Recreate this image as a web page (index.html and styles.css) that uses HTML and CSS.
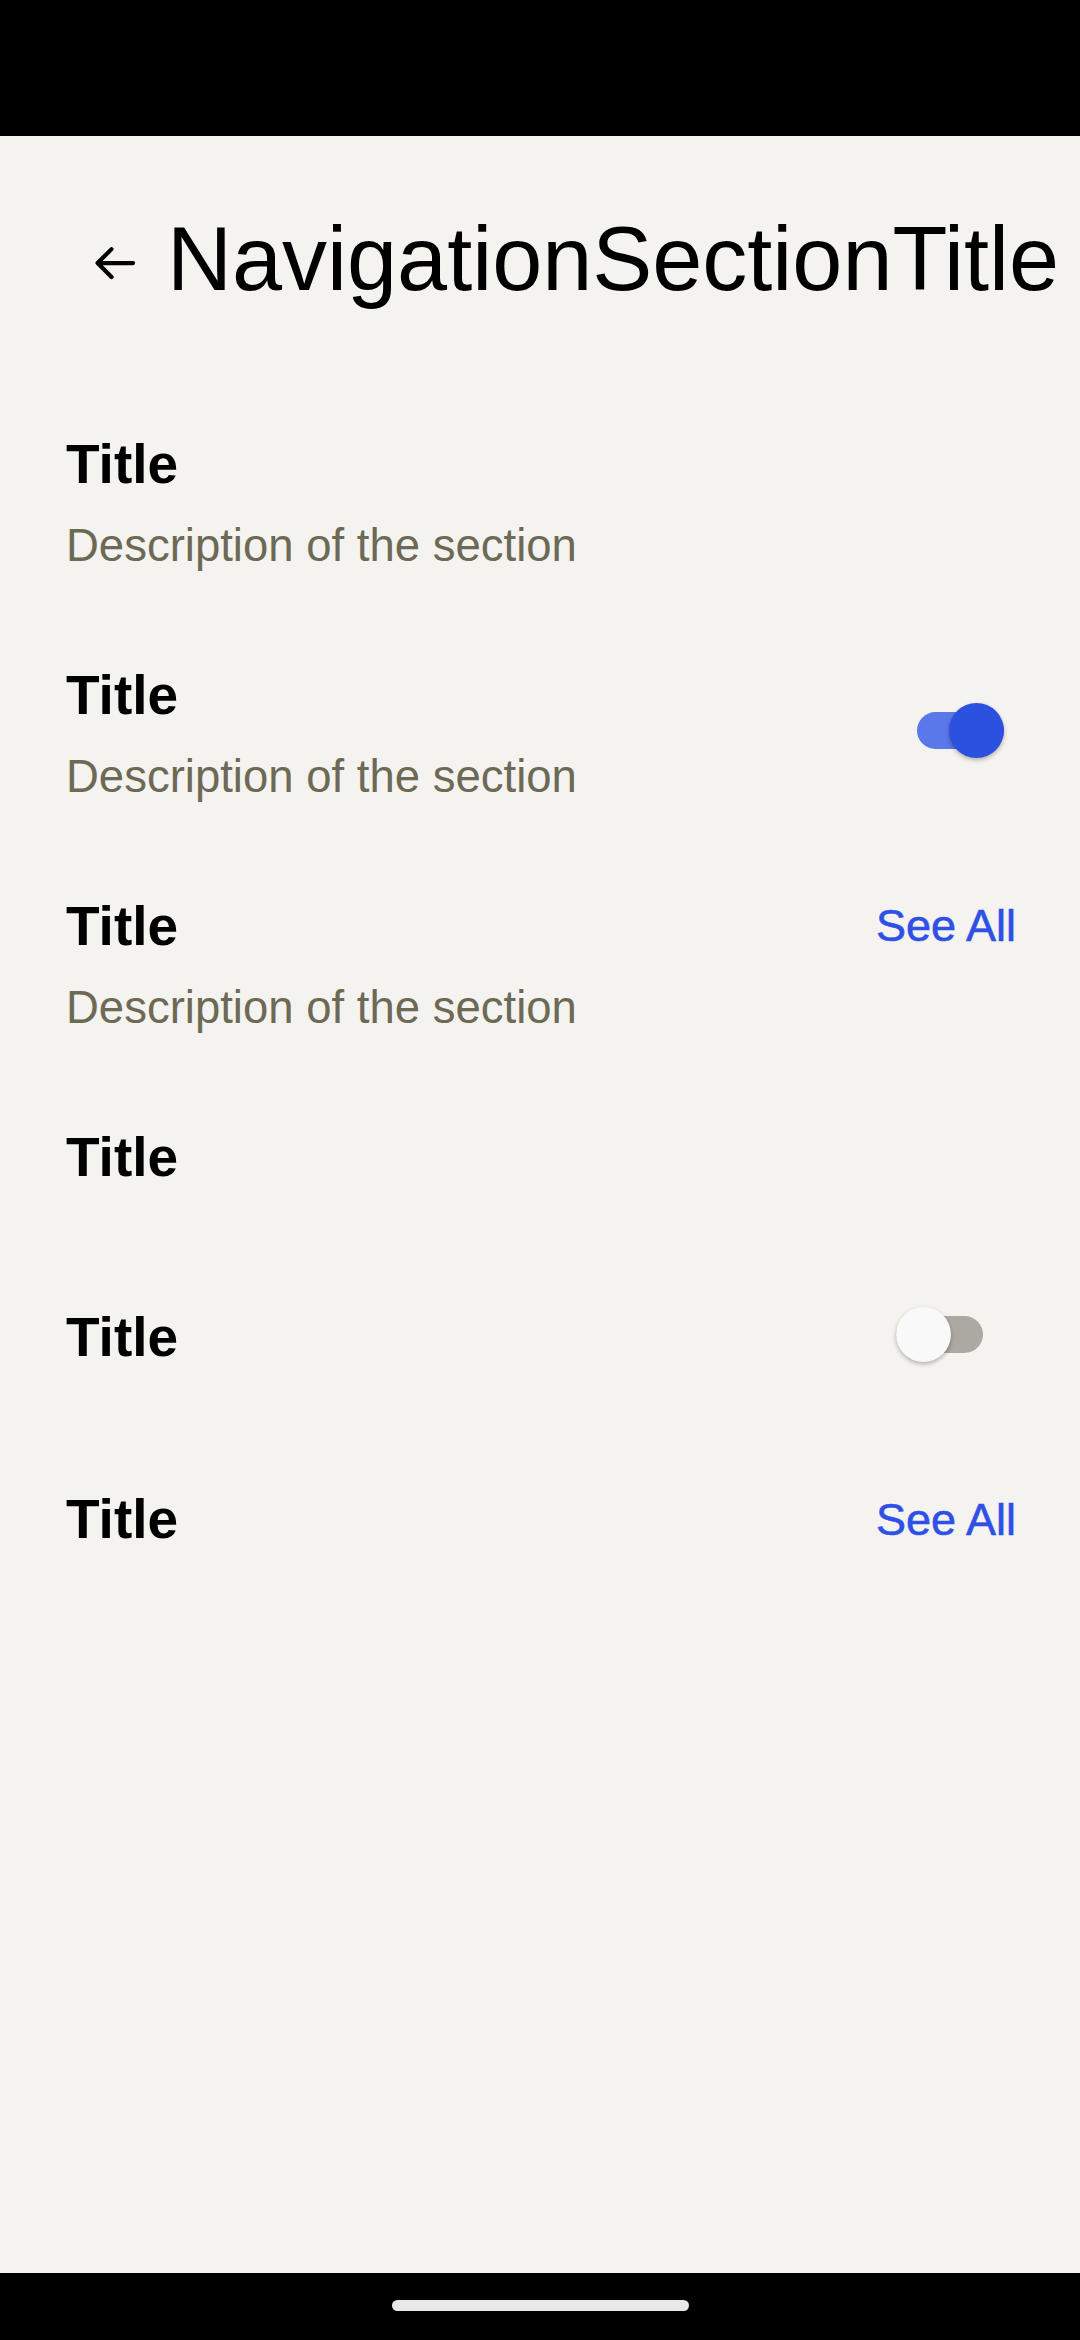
FILE: index.html
```html
<!DOCTYPE html>
<html lang="en">
<head>
<meta charset="utf-8">
<title>NavigationSectionTitle</title>
<link rel="stylesheet" href="styles.css">
</head>
<body>
<div class="screen">
  <div class="status-bar"></div>
  <main class="content">
    <header class="top-bar">
      <svg class="back-icon" viewBox="0 0 24 24" aria-hidden="true">
        <path d="M18.3 12.2H5 M10.1 6.9 L4.8 12.2 L10.1 17.5" />
      </svg>
      <h1 class="page-title">NavigationSectionTitle</h1>
    </header>

    <section class="row">
      <div class="row-text">
        <h2 class="row-title">Title</h2>
        <p class="row-desc">Description of the section</p>
      </div>
    </section>

    <section class="row">
      <div class="row-text">
        <h2 class="row-title">Title</h2>
        <p class="row-desc">Description of the section</p>
      </div>
      <div class="switch switch--on" role="switch" aria-checked="true">
        <span class="switch-track"></span>
        <span class="switch-thumb"></span>
      </div>
    </section>

    <section class="row">
      <div class="row-text">
        <h2 class="row-title">Title</h2>
        <p class="row-desc">Description of the section</p>
      </div>
      <a class="see-all">See All</a>
    </section>

    <section class="row row--single">
      <div class="row-text">
        <h2 class="row-title">Title</h2>
      </div>
    </section>

    <section class="row row--single">
      <div class="row-text">
        <h2 class="row-title">Title</h2>
      </div>
      <div class="switch switch--off" role="switch" aria-checked="false">
        <span class="switch-track"></span>
        <span class="switch-thumb"></span>
      </div>
    </section>

    <section class="row row--single">
      <div class="row-text">
        <h2 class="row-title">Title</h2>
      </div>
      <a class="see-all see-all--last">See All</a>
    </section>
  </main>
  <div class="nav-bar"><div class="nav-handle"></div></div>
</div>
</body>
</html>
```

FILE: styles.css
```css
html, body {
  margin: 0;
  padding: 0;
}

body {
  background: #f4f3ef;
  font-family: "Liberation Sans", Arial, sans-serif;
  color: #000;
}

.screen {
  display: flex;
  flex-direction: column;
  height: 2340px;
  width: 1080px;
  overflow: hidden;
}

.status-bar {
  height: 136px;
  background: #000;
  flex: none;
}

.content {
  flex: 1;
  background: #f4f3ef;
}

.top-bar {
  display: flex;
  align-items: flex-start;
  padding: 73px 0 77px 85px;
}

.back-icon {
  width: 63px;
  height: 63px;
  margin-top: 22px;
  flex: none;
  fill: none;
  stroke: #000;
  stroke-width: 1.6;
  stroke-linecap: round;
  stroke-linejoin: round;
}

.page-title {
  margin: 0 0 0 19px;
  font-size: 90px;
  line-height: 100px;
  font-weight: 400;
  white-space: nowrap;
  color: #000;
}

.row {
  display: flex;
  align-items: center;
  padding: 45px 64px 46px 66px;
}

.row--single {
  padding-bottom: 69px;
}

.row-text {
  flex: 1;
  min-width: 0;
}

.row-title {
  margin: 0;
  font-size: 55px;
  line-height: 66px;
  font-weight: 700;
  color: #000;
}

.row-desc {
  margin: 23px 0 0 0;
  font-size: 45.5px;
  line-height: 51px;
  color: #6d6955;
}

.see-all {
  align-self: flex-start;
  font-size: 45px;
  line-height: 66px;
  color: #2e50e6;
  text-decoration: none;
  -webkit-text-stroke: 0.6px #2e50e6;
}

.see-all--last {
  margin-top: 3px;
}

.switch {
  position: relative;
  display: flex;
  align-items: center;
  width: 87px;
  height: 55px;
  flex: none;
}

.switch-track {
  width: 87px;
  height: 37px;
  border-radius: 19px;
}

.switch-thumb {
  position: absolute;
  top: 0;
  width: 55px;
  height: 55px;
  border-radius: 50%;
  box-shadow: 0 2px 4px rgba(0, 0, 0, 0.28);
}

.switch--on {
  margin-right: 12px;
  margin-bottom: 3px;
}

.switch--on .switch-track {
  background: #5a78ea;
}

.switch--on .switch-thumb {
  right: 0;
  background: #2c50e0;
}

.switch--off {
  margin-right: 33px;
  margin-bottom: 6px;
}

.switch--off .switch-track {
  background: #aba9a1;
}

.switch--off .switch-thumb {
  left: 0;
  background: #f9f9f9;
}

.nav-bar {
  height: 67px;
  background: #000;
  flex: none;
  display: flex;
  justify-content: center;
  padding-top: 27px;
  box-sizing: border-box;
}

.nav-handle {
  width: 297px;
  height: 11px;
  border-radius: 6px;
  background: #e8e8e8;
}
```
